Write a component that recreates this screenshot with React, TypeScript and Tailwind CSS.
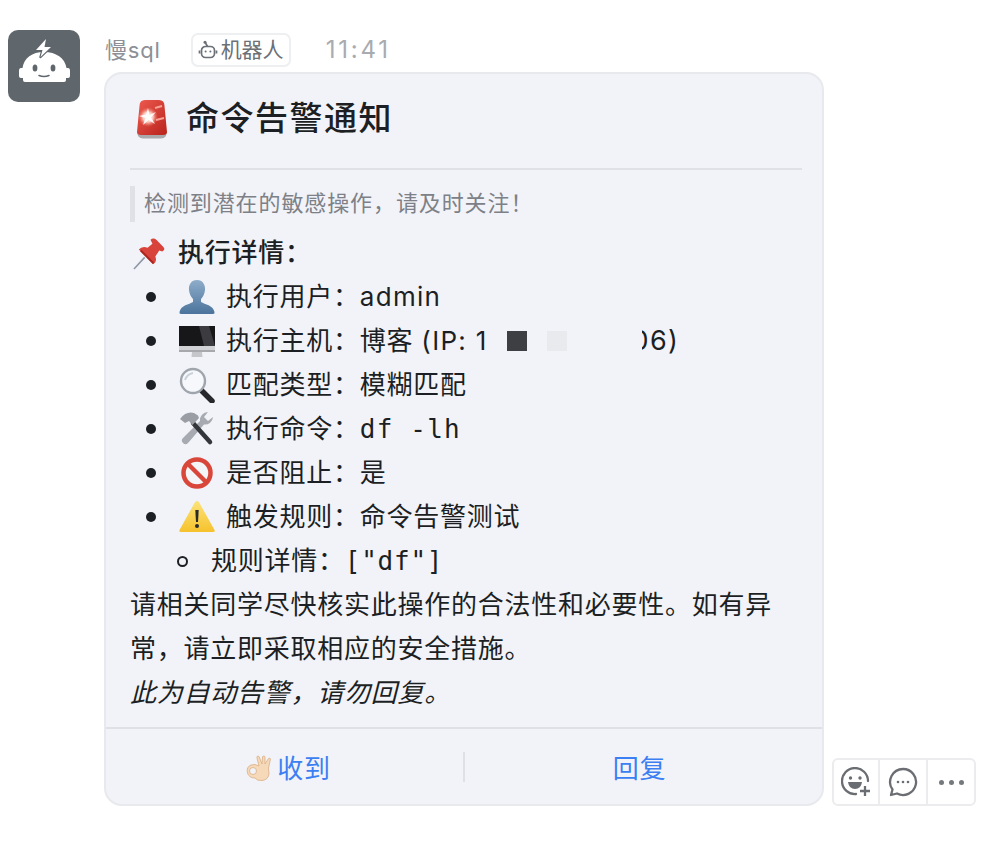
const latin = "font-['Inter','Noto_Sans_CJK_SC',sans-serif]";
const mono = "font-['DejaVu_Sans_Mono','Noto_Sans_CJK_SC',monospace]";

function RobotAvatar() {
  return (
    <div className="flex h-[72px] w-[72px] shrink-0 items-center justify-center rounded-[10px] bg-[#5f666c]">
      <svg viewBox="0 0 72 72" className="h-[72px] w-[72px]">
        <path d="M36 22 C24 22 16 28 14.500 38 L13 38 Q11 38 11 41 L11 46 Q11 48 13 48 L15 48 L15 50 Q15 52 17 52 L56 52 Q58 52 58 50 L58 48 L60 48 Q62 48 62 46 L62 41 Q62 38 60 38 L58.500 38 C57 28 48 22 36 22 Z" fill="#fff" />
        <path d="M38 9 L28 20 L34.500 20 L32.500 27 L43 17 L36.500 17 Z" fill="#fff" stroke="#5f666c" strokeWidth="2.400" paintOrder="stroke" strokeLinejoin="round" />
        <ellipse cx="27" cy="38" rx="2.400" ry="3.500" fill="#5f666c" />
        <ellipse cx="45" cy="38" rx="2.400" ry="3.500" fill="#5f666c" />
        <path d="M31 45.500 Q36 47.500 41 45.500" stroke="#5f666c" strokeWidth="1.500" fill="none" strokeLinecap="round" />
      </svg>
    </div>
  );
}

function BotTag() {
  return (
    <svg viewBox="0 0 20 20" className="h-5 w-5" fill="none" stroke="#6b6f76" strokeWidth="1.700">
      <circle cx="7" cy="2.300" r="1.500" fill="#6b6f76" stroke="none" />
      <path d="M7.500 3l2 3.500" />
      <rect x="3.500" y="6.500" width="13" height="11" rx="4" />
      <path d="M1.500 10.500v3M18.500 10.500v3" />
      <circle cx="7.600" cy="11.500" r="1" fill="#6b6f76" stroke="none" />
      <circle cx="12.400" cy="11.500" r="1" fill="#6b6f76" stroke="none" />
    </svg>
  );
}

function Siren() {
  return (
    <svg viewBox="0 0 32 40" className="ml-[6px] h-[40px] w-[32px]">
      <defs>
        <linearGradient id="sirenRed" x1="0" x2="1" y1="0" y2="1">
          <stop offset="0" stopColor="#ee5a4f" />
          <stop offset="1" stopColor="#b8241c" />
        </linearGradient>
        <radialGradient id="sirenGlow" cx="0.500" cy="0.500" r="0.500">
          <stop offset="0" stopColor="#ffffff" />
          <stop offset="0.500" stopColor="#ffc9bd" />
          <stop offset="1" stopColor="#ef6a5e" stopOpacity="0" />
        </radialGradient>
      </defs>
      <path d="M1.500 33 Q1 39 7 39.500 L25 39.500 Q31 39 30.500 33 Z" fill="#a9a9ab" />
      <path d="M3.500 7 Q3.500 1 9 1 L23 1 Q28.500 1 28.500 7 L31 33 Q31 36 27 36 L5 36 Q1 36 1 33 Z" fill="url(#sirenRed)" />
      <circle cx="12" cy="18" r="10" fill="url(#sirenGlow)" />
      <path d="M12 9 L13.500 16 L20 13 L15 18.500 L19 25 L12.500 21 L7 26 L9.500 19 L3 17 L10 15.500 Z" fill="#fff" opacity="0.900" />
      <path d="M19 9 L26 7 M20 21 L28 19" stroke="#f8a196" strokeWidth="2" />
    </svg>
  );
}

function Pin() {
  return (
    <svg viewBox="0 0 36 36" className="h-[35px] w-[35px]">
      <path d="M1 35 L12 23" stroke="#8d97a6" strokeWidth="1.600" />
      <g transform="translate(-3 3)">
        <path d="M21 2 Q24 -1 27 2 L34 9 Q37 12 33 14 L30 13 L26 19 Q28 25 24 27 L9 12 Q12 8 18 10 L23 6 Z" fill="#d8433b" />
        <path d="M11 13 L24 26" stroke="#a9261f" strokeWidth="2" />
      </g>
    </svg>
  );
}

function User() {
  return (
    <svg viewBox="0 0 36 36" className="h-9 w-9">
      <defs>
        <linearGradient id="userBlue" x1="0" x2="0" y1="0" y2="1">
          <stop offset="0" stopColor="#8eadca" />
          <stop offset="1" stopColor="#4b739b" />
        </linearGradient>
      </defs>
      <path d="M18 1 C12 1 9.500 6 10 11 C10.400 15 12 18 14 20 L14 23 C10 25.500 2 26 0.500 33 Q0 35 2 35 L34 35 Q36 35 35.500 33 C34 26 26 25.500 22 23 L22 20 C24 18 25.600 15 26 11 C26.500 6 24 1 18 1 Z" fill="url(#userBlue)" />
    </svg>
  );
}

function Monitor() {
  return (
    <svg viewBox="0 0 36 36" className="h-9 w-9">
      <path d="M13 29 L23 29 L23.500 34 L12.500 34 Z" fill="#c4c6c9" />
      <rect x="0" y="3" width="36" height="26" rx="1.500" fill="#d0d2d5" />
      <rect x="0" y="3" width="36" height="20" fill="#17171a" />
      <path d="M20 3 L30 3 L36 23 L25 23 Z" fill="#3b3b40" />
      <rect x="0" y="27" width="36" height="2" fill="#a6a8ac" />
    </svg>
  );
}

function Magnifier() {
  return (
    <svg viewBox="0 0 36 36" className="h-9 w-9">
      <path d="M23 24 L33 34" stroke="#26282c" strokeWidth="5.500" strokeLinecap="round" />
      <circle cx="14" cy="14" r="12" fill="#f6f8fb" stroke="#9fa5ad" strokeWidth="2.400" />
      <path d="M6 13 Q8 7 14 6" stroke="#c9d1da" strokeWidth="2" fill="none" />
    </svg>
  );
}

function Tools() {
  return (
    <svg viewBox="0 0 36 36" className="h-9 w-9">
      <path d="M34 6 A8 8 0 0 1 25 13.500 L9 32 A3.500 3.500 0 0 1 4 27 L21 10 A8 8 0 0 1 29 1 L25 6 L29 10 Z" fill="#a7abb1" />
      <path d="M14 12 L31 31" stroke="#33363a" strokeWidth="4.500" strokeLinecap="round" />
      <path d="M1 8 Q7 0 15 2 L19 4.500 L20 7 L13.500 14 L10 10 L6 12 Z" fill="#9a9ea4" />
    </svg>
  );
}

function NoEntry() {
  return (
    <svg viewBox="0 0 36 36" className="h-9 w-9">
      <circle cx="18" cy="18" r="13.500" fill="#f4f5f7" stroke="#d9463a" strokeWidth="4.500" />
      <path d="M8.500 8.500 L27.500 27.500" stroke="#d9463a" strokeWidth="4.500" />
    </svg>
  );
}

function Warning() {
  return (
    <svg viewBox="0 0 36 36" className="h-9 w-9">
      <defs>
        <linearGradient id="warnYellow" x1="0" x2="0" y1="0" y2="1">
          <stop offset="0" stopColor="#fbe37a" />
          <stop offset="1" stopColor="#f6c22d" />
        </linearGradient>
      </defs>
      <path d="M18 2 Q19.500 2 20.500 4 L35.500 31 Q36.500 33 34 33 L2 33 Q-0.500 33 0.500 31 L15.500 4 Q16.500 2 18 2 Z" fill="url(#warnYellow)" />
      <path d="M16.300 11 L19.700 11 L19 23 L17 23 Z" fill="#2a2a2a" />
      <circle cx="18" cy="27" r="2" fill="#2a2a2a" />
    </svg>
  );
}

function OkHand() {
  return (
    <svg viewBox="0 0 26 26" className="h-[26px] w-[26px]">
      <path d="M13 11 L11 3 Q10.500 1 12 1 Q13.500 1 14 4 L16 9 L16.500 2 Q17 0.500 18.300 1 Q19 1.500 19 3 L19 9 L22.500 3.500 Q24 2.500 24.500 4 L22.500 13 L23 19 Q22 25 16 25.500 Q11 26 9 23 Q3 23 1.500 18 Q0 12 5 10 Q9 8.500 13 11 Z" fill="#f6d9b8" stroke="#d9ae84" strokeWidth="0.800" />
      <circle cx="7" cy="16" r="3.500" fill="#f2f3f8" stroke="#d9ae84" strokeWidth="0.800" />
    </svg>
  );
}

function Row({ icon, label, children }: { icon: React.ReactNode; label: string; children: React.ReactNode }) {
  return (
    <li className="flex h-11 items-center pl-4 leading-[44px]">
      <span className="h-[10px] w-[10px] rounded-full bg-[#1c1f23]" />
      <span className="ml-[23px] flex h-11 w-9 items-center justify-center">{icon}</span>
      <span className="ml-[11px]">{label}：</span>
      {children}
    </li>
  );
}

export default function App() {
  return (
    <div className={`${latin} min-h-[844px] bg-white pl-2 pt-[30px]`}>
      <div className="flex items-start gap-6">
        <RobotAvatar />
        <div className="-mt-[2px] w-[720px]">
          <div className="flex h-[44px] items-center text-[22px] text-[#8c9096]">
            <span className="ml-[1px] tracking-[0.8px]">慢sql</span>
            <span className="ml-[30px] flex h-[34px] items-center gap-[3px] rounded-[7px] border-2 border-[#eeeff1] bg-white px-[5px] text-[21px] text-[#6b6f76]">
              <BotTag />
              机器人
            </span>
            <span className="ml-[35px] text-[24px] tracking-[2.800px] text-[#a8abb0]">11:41</span>
          </div>
          <div className="relative">
            <article className="overflow-hidden rounded-[18px] border-2 border-[#e8e9ed] bg-[#f2f3f8] text-[26px] tracking-[0.75px] text-[#1c1f23]">
              <div className="pl-6 pr-5">
                <header className="flex h-[96px] items-center gap-[18px] border-b-2 border-[#dfe1e6] pb-[4px]">
                  <Siren />
                  <h1 className="text-[33px] font-medium tracking-[1.500px]">命令告警通知</h1>
                </header>
                <blockquote className="mt-[16px] h-[36px] border-l-[5px] border-[#dfe1e6] pl-[9px] text-[22px] leading-[34px] tracking-[0.9px] text-[#7d8187]">
                  检测到潜在的敏感操作，请及时关注！
                </blockquote>
                <div className="mb-[1px] ml-[3px] mt-[8px] flex h-[44px] items-center gap-[10px] font-medium">
                  <Pin />
                  <span>执行详情：</span>
                </div>
                <ul>
                  <Row icon={<User />} label="执行用户"><span className="tracking-[1.300px]">admin</span></Row>
                  <Row icon={<Monitor />} label="执行主机">
                    <span className="inline-flex items-center">
                      博客&nbsp;<span className="tracking-[1.300px]">(IP: 1</span>
                      <span className="ml-[19px] h-5 w-5 bg-[#3e3f43]" />
                      <span className="ml-5 h-5 w-5 bg-[#e9eaee]" />
                      <span className="relative ml-[65px] text-[27px] tracking-[1.300px]">
                        06)
                        <span className="absolute left-0 top-0 h-full w-[10px] bg-[#f2f3f8]" />
                      </span>
                    </span>
                  </Row>
                  <Row icon={<Magnifier />} label="匹配类型">模糊匹配</Row>
                  <Row icon={<Tools />} label="执行命令"><span className={`${mono} tracking-[1.200px]`}>df -lh</span></Row>
                  <Row icon={<NoEntry />} label="是否阻止">是</Row>
                  <Row icon={<Warning />} label="触发规则">命令告警测试</Row>
                  <li className="flex h-11 items-center pl-[47px] leading-[44px]">
                    <span className="h-[11px] w-[11px] rounded-full border-2 border-[#1c1f23]" />
                    <span className="ml-[23px]">规则详情：</span>
                    <span className={mono}>["df"]</span>
                  </li>
                </ul>
                <p className="pr-[6px] leading-[44px]">
                  请相关同学尽快核实此操作的合法性和必要性。如有异常，请立即采取相应的安全措施。
                </p>
                <p className="h-[44px] italic leading-[44px]">此为自动告警，请勿回复。</p>
              </div>
              <footer className="mt-[12px] flex h-[77px] items-center border-t-2 border-[#dfe1e6] text-[#3b7ff2]">
                <button className="flex w-[357px] shrink-0 items-center justify-center gap-[5px] pl-[8px] pt-[3px] tracking-[0.75px]">
                  <OkHand />
                  收到
                </button>
                <span className="h-[30px] w-[2px] bg-[#dfe1e6]" />
                <button className="flex-1 pr-[8px] pt-[3px] tracking-[0.75px]">回复</button>
              </footer>
            </article>
            <div className="absolute bottom-0 left-[728px] flex h-[48px] w-[144px] rounded-[6px] border-2 border-[#ececee] bg-white">
              <button className="flex w-[46px] items-center justify-center border-r-2 border-[#ececee]">
                <svg viewBox="0 0 30 30" className="h-[30px] w-[30px]" fill="none" stroke="#6a6d72" strokeWidth="2.300">
                  <path d="M27 14 A13 13 0 1 0 15 27" strokeLinecap="round" />
                  <circle cx="9.500" cy="11" r="1.700" fill="#6a6d72" stroke="none" />
                  <circle cx="19" cy="11" r="1.700" fill="#6a6d72" stroke="none" />
                  <path d="M7 15 L21 15 Q20 22 14 22 Q8 22 7 15 Z" fill="#6a6d72" stroke="none" />
                  <path d="M24 19 L24 29 M19 24 L29 24" />
                </svg>
              </button>
              <button className="flex w-[48px] items-center justify-center border-r-2 border-[#ececee]">
                <svg viewBox="0 0 30 30" className="h-[30px] w-[30px]" fill="none" stroke="#6a6d72" strokeWidth="2.300">
                  <path d="M15 2 A13 13 0 1 1 9 26.500 L3 28 L4.500 22.500 A13 13 0 0 1 15 2 Z" strokeLinejoin="round" />
                  <circle cx="10" cy="15" r="1.300" fill="#6a6d72" stroke="none" />
                  <circle cx="15" cy="15" r="1.300" fill="#6a6d72" stroke="none" />
                  <circle cx="20" cy="15" r="1.300" fill="#6a6d72" stroke="none" />
                </svg>
              </button>
              <button className="flex flex-1 items-center justify-center gap-[5px]">
                <span className="h-[5px] w-[5px] rounded-full bg-[#75787d]" />
                <span className="h-[5px] w-[5px] rounded-full bg-[#75787d]" />
                <span className="h-[5px] w-[5px] rounded-full bg-[#75787d]" />
              </button>
            </div>
          </div>
        </div>
      </div>
    </div>
  );
}
